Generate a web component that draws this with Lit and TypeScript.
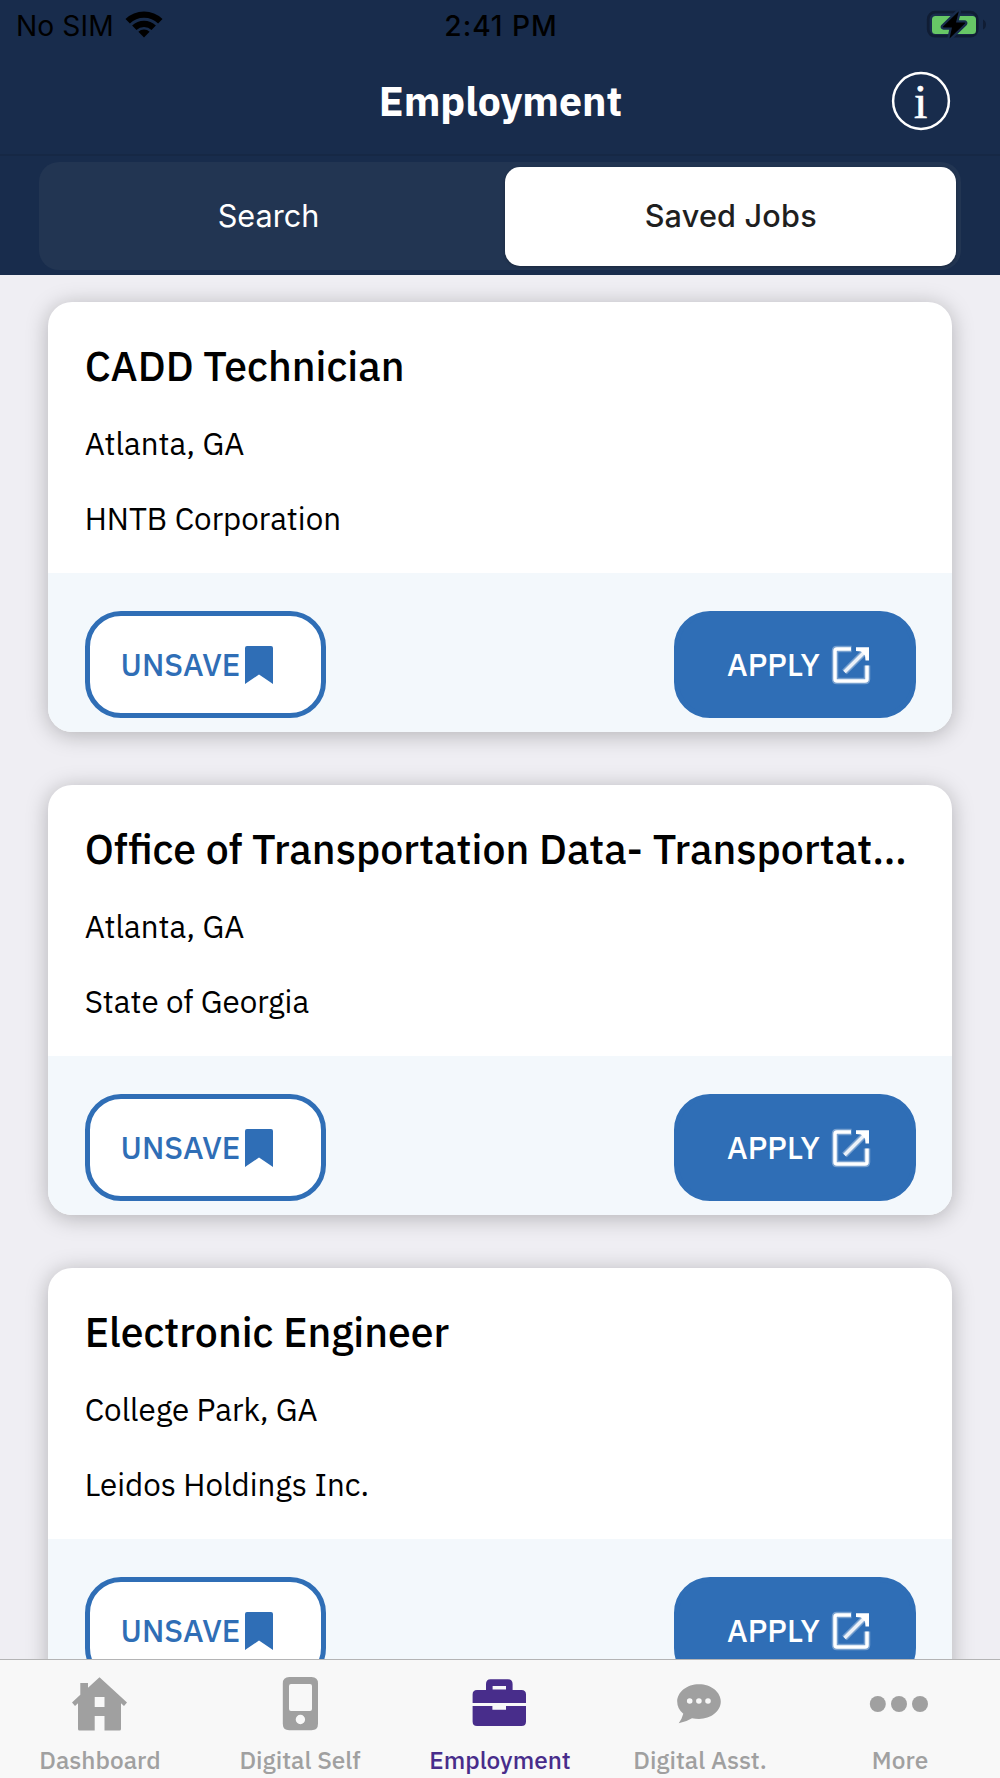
import { LitElement, html, css, svg } from "lit";
import type { SVGTemplateResult } from "lit";
import { customElement, property, state } from "lit/decorators.js";
import { classMap } from "lit/directives/class-map.js";

interface Job {
  title: string;
  location: string;
  company: string;
}

interface Tab {
  label: string;
  icon: SVGTemplateResult;
}

const JOBS: Job[] = [
  { title: "CADD Technician", location: "Atlanta, GA", company: "HNTB Corporation" },
  {
    title: "Office of Transportation Data- Transportat…",
    location: "Atlanta, GA",
    company: "State of Georgia",
  },
  { title: "Electronic Engineer", location: "College Park, GA", company: "Leidos Holdings Inc." },
];

const TABS: Tab[] = [
  {
    label: "Dashboard",
    icon: svg`<path fill-rule="evenodd" d="M29.5 4.3 57 29.5 54 33 51 30.3V56Q51 57.5 49.5 57.5H34.5V43H24.7V57.5H9.5Q8 57.5 8 56V30.3L5 33 2 29.5 10.3 21.8V10H18V14.8ZM24.7 24V34H34.5V24Z"/>`,
  },
  {
    label: "Digital Self",
    icon: svg`<path fill-rule="evenodd" d="M19.3 4H41.5Q48 4 48 10.5V50.8Q48 57.3 41.5 57.3H19.3Q12.8 57.3 12.8 50.8V10.5Q12.8 4 19.3 4ZM21 11Q19 11 19 13V36Q19 38 21 38H40Q42 38 42 36V13Q42 11 40 11ZM30.4 41.8A4.7 4.7 0 1 0 30.4 51.2 4.7 4.7 0 1 0 30.4 41.8Z"/>`,
  },
  {
    label: "Employment",
    icon: svg`<path fill-rule="evenodd" d="M16 17V11Q16 6.2 20.5 6.2H38Q42.6 6.2 42.6 11V17H51.5Q56 17 56 21.5V30H2.6V21.5Q2.6 17 7 17ZM22.6 13V16.6H36V13Z"/><path d="M2.6 33H22.4V36.7H36V33H56V48.5Q56 53 51.5 53H7Q2.6 53 2.6 48.5Z"/>`,
  },
  {
    label: "Digital Asst.",
    icon: svg`<path fill-rule="evenodd" d="M29 11.2C41 11.2 50.8 19 50.8 28.6S41 46 29 46Q25.5 46 22 45.2 16 49 8.7 50.2 12 46 13.3 40.8 7.2 36 7.2 28.6C7.2 19 17 11.2 29 11.2ZM19.7 25.2A2.8 2.8 0 1 0 19.7 30.8 2.8 2.8 0 1 0 19.7 25.2ZM28.9 25.2A2.8 2.8 0 1 0 28.9 30.8 2.8 2.8 0 1 0 28.9 25.2ZM38 25.2A2.8 2.8 0 1 0 38 30.8 2.8 2.8 0 1 0 38 25.2Z"/>`,
  },
  {
    label: "More",
    icon: svg`<circle cx="7.8" cy="31" r="8"/><circle cx="29" cy="31" r="8"/><circle cx="50" cy="31" r="8"/>`,
  },
];

@customElement("status-bar")
export class StatusBar extends LitElement {
  static styles = css`
    :host {
      display: grid;
      grid-template-columns: 1fr auto 1fr;
      align-items: center;
      height: 47px;
      padding: 0 13px 0 16px;
      color: #000;
      font: 400 28.2px/34px Inter, "Liberation Sans", sans-serif;
    }
    .carrier {
      display: flex;
      align-items: center;
      gap: 11px;
      padding-top: 4px;
      letter-spacing: 0.1px;
    }
    .time {
      padding: 4px 1px 0 0;
      font-weight: 500;
      letter-spacing: 0.95px;
    }
    .battery {
      justify-self: end;
      display: block;
    }
    .wifi {
      display: block;
      margin-top: -4px;
    }
  `;

  render() {
    return html`
      <div class="carrier">
        No SIM
        <svg class="wifi" width="38" height="28" viewBox="0 0 38 28">
          <g fill="none" stroke="#000" stroke-width="6.3">
            <path d="M2.7 11.2A23.3 23.3 0 0 1 35.3 11.2" />
            <path d="M9.3 17.8A14.1 14.1 0 0 1 28.7 17.8" />
          </g>
          <path d="M19 27.5 13.4 21.8A8 8 0 0 1 24.6 21.8Z" />
        </svg>
      </div>
      <div class="time">2:41 PM</div>
      <svg class="battery" width="62" height="32" viewBox="0 0 62 32">
        <rect x="3.2" y="4.2" width="49" height="24" rx="7" fill="none" stroke="#101d34" stroke-width="2.8" />
        <rect x="7" y="8" width="44" height="18" rx="3.5" fill="#67c766" />
        <path d="M58 11.5Q61 13 61 16.5T58 21.5Z" fill="#101d34" />
        <path
          d="M33.8 3.2 18 18.6Q17.6 19.4 18.6 19.4H27L24.5 30.6 40 15.6Q40.6 14.6 39.4 14.6H31Z"
          fill="#000"
          stroke="#182c4c"
          stroke-width="4.5"
          stroke-linejoin="round"
          paint-order="stroke"
        />
      </svg>
    `;
  }
}

@customElement("nav-header")
export class NavHeader extends LitElement {
  @property() heading = "";

  static styles = css`
    :host {
      display: grid;
      grid-template-columns: 1fr auto 1fr;
      align-items: center;
      height: 107px;
      padding: 0 48px 0 49px;
      border-bottom: 2px solid #162845;
      color: #fff;
    }
    .heading {
      grid-column: 2;
      margin: 0;
      font: 700 41px/54px "IBM Plex Sans", Roboto, sans-serif;
    }
    .info {
      justify-self: end;
      display: block;
      overflow: visible;
    }
    .info-mark {
      font: 400 48px "Liberation Serif", serif;
    }
  `;

  render() {
    return html`
      <h1 class="heading">${this.heading}</h1>
      <svg class="info" width="62" height="60" viewBox="0 0 62 60">
        <circle cx="31" cy="30" r="27.9" fill="none" stroke="#fff" stroke-width="2.5" />
        <text
          class="info-mark"
          x="30.6"
          y="46.8"
          text-anchor="middle"
          fill="#fff"
          stroke="#fff"
          stroke-width="0.7"
        >i</text>
      </svg>
    `;
  }
}

@customElement("segment-control")
export class SegmentControl extends LitElement {
  @property({ attribute: false }) segments: string[] = [];
  @state() private selected = 1;

  static styles = css`
    :host {
      display: block;
      padding: 6px 39.5px 5px 39px;
    }
    .track {
      display: grid;
      grid-template-columns: 466px 1fr;
      box-sizing: border-box;
      height: 108px;
      padding: 5px 5px 4.5px 0;
      border-radius: 20px;
      background: #223552;
    }
    .segment {
      display: flex;
      align-items: center;
      justify-content: center;
      padding: 0 7px 1px 0;
      border: 0;
      border-radius: 15px;
      background: none;
      color: #fff;
      font: 400 30.6px/36px Inter, "Liberation Sans", sans-serif;
    }
    .segment.selected {
      padding: 0 0 1px 1px;
      background: #fff;
      color: #1f1f1f;
      font-weight: 500;
      letter-spacing: 0.2px;
      box-shadow: 0 1px 3px rgba(0, 0, 0, 0.25);
    }
  `;

  render() {
    return html`
      <div class="track">
        ${this.segments.map(
          (label, i) => html`
            <button
              class=${classMap({ segment: true, selected: i === this.selected })}
              @click=${() => (this.selected = i)}
            >
              ${label}
            </button>
          `
        )}
      </div>
    `;
  }
}

@customElement("job-card")
export class JobCard extends LitElement {
  @property({ attribute: false }) job!: Job;

  static styles = css`
    :host {
      display: block;
      flex: none;
      height: 430px;
      border-radius: 24px;
      overflow: hidden;
      background: #fff;
      color: #000;
      box-shadow: 0 3px 22px rgba(0, 0, 0, 0.26);
      font: 400 31.3px/41px "IBM Plex Sans", Roboto, sans-serif;
    }
    .details {
      box-sizing: border-box;
      height: 271px;
      padding: 36.6px 30px 0 36.7px;
    }
    .title {
      margin: 0;
      white-space: nowrap;
      font-size: 41.04px;
      font-weight: 500;
      line-height: 54px;
    }
    .location {
      margin: 30px 0 34px;
    }
    .company {
      margin: 0;
    }
    .actions {
      display: flex;
      justify-content: space-between;
      box-sizing: border-box;
      height: 159px;
      padding: 38px 36.5px 0;
      background: #f3f8fc;
    }
    .button {
      display: flex;
      align-items: center;
      box-sizing: border-box;
      width: 241.5px;
      height: 106.5px;
      border: 5px solid #2f6eb6;
      border-radius: 36px;
      font: 500 31.3px/41px "IBM Plex Sans", Roboto, sans-serif;
    }
    .unsave {
      gap: 4.5px;
      padding: 1px 0 0 31px;
      background: #fff;
      color: #2f6eb6;
    }
    .apply {
      gap: 11px;
      padding: 1px 0 0 48px;
      background: #2f6eb6;
      color: #fff;
    }
    .icon {
      display: block;
      flex: none;
    }
  `;

  render() {
    const { title, location, company } = this.job;
    return html`
      <div class="details">
        <h2 class="title">${title}</h2>
        <p class="location">${location}</p>
        <p class="company">${company}</p>
      </div>
      <div class="actions">
        <button class="button unsave">
          UNSAVE
          <svg class="icon" width="28" height="38" viewBox="0 0 28 38">
            <path d="M2 0H26Q28 0 28 2V38L14 28.5 0 38V2Q0 0 2 0Z" fill="currentColor" />
          </svg>
        </button>
        <button class="button apply">
          APPLY
          <svg class="icon" width="40" height="40" viewBox="0 0 40 40" fill="none" stroke="#fff">
            <g stroke-width="6.5" stroke-opacity="0.35">
              <path d="M20.5 4H6Q4 4 4 6V34Q4 36 6 36H34Q36 36 36 34V20.5" />
              <path d="M13.5 27 34 6.5" />
            </g>
            <g stroke-width="3.5">
              <path d="M20 4H6Q4 4 4 6V34Q4 36 6 36H34Q36 36 36 34V20.5" />
              <path d="M13.5 27 34 6.5" stroke-opacity="0.85" />
            </g>
            <path d="M25 2.3H38V15.5H34.5L34 10.5 30 6.5 25 6Z" fill="#fff" stroke="none" />
          </svg>
        </button>
      </div>
    `;
  }
}

@customElement("tab-bar")
export class TabBar extends LitElement {
  @property({ attribute: false }) tabs: Tab[] = [];
  @property() active = "";

  static styles = css`
    :host {
      display: grid;
      grid-template-columns: repeat(5, 1fr);
      flex: none;
      box-sizing: border-box;
      height: 119.5px;
      border-top: 1px solid #b4b4b5;
      background: #f8f8f8;
      font: 500 24.4px/32px "IBM Plex Sans", Roboto, sans-serif;
    }
    .tab {
      display: flex;
      flex-direction: column;
      align-items: center;
      gap: 4.5px;
      padding-top: 13.5px;
      color: #a0a0a0;
    }
    .tab.active {
      color: #482d8b;
    }
    .icon {
      display: block;
      fill: currentColor;
      overflow: visible;
    }
  `;

  render() {
    return this.tabs.map(
      ({ label, icon }) => html`
        <div class=${classMap({ tab: true, active: label === this.active })}>
          <svg class="icon" width="60" height="66" viewBox="0 0 60 66">${icon}</svg>
          ${label}
        </div>
      `
    );
  }
}

@customElement("app-root")
export class AppRoot extends LitElement {
  static styles = css`
    :host {
      display: flex;
      flex-direction: column;
      width: 1000px;
      height: 1778px;
      overflow: hidden;
      background: #efeef3;
    }
    .top {
      flex: none;
      background: #182c4c;
    }
    .jobs {
      display: flex;
      flex: 1;
      flex-direction: column;
      gap: 53px;
      min-height: 0;
      padding: 27px 48px 0;
      overflow: hidden;
    }
  `;

  render() {
    return html`
      <header class="top">
        <status-bar></status-bar>
        <nav-header heading="Employment"></nav-header>
        <segment-control .segments=${["Search", "Saved Jobs"]}></segment-control>
      </header>
      <main class="jobs">${JOBS.map((job) => html`<job-card .job=${job}></job-card>`)}</main>
      <tab-bar .tabs=${TABS} active="Employment"></tab-bar>
    `;
  }
}
